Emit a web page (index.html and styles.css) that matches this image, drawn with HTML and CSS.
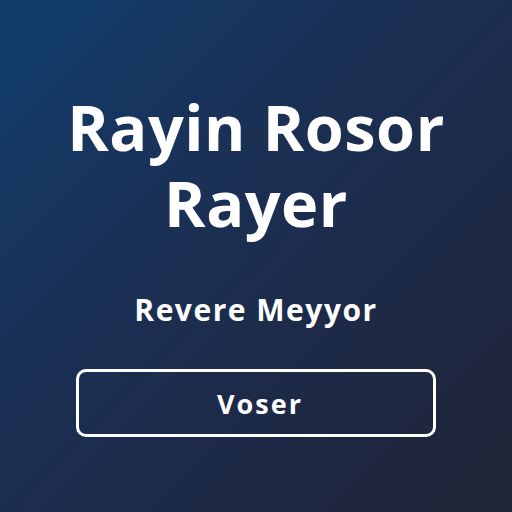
FILE: index.html
```html
<!DOCTYPE html>
<html>
<head>
<meta charset="utf-8">
<link rel="stylesheet" href="styles.css">
</head>
<body>
<main class="screen">
  <h1 class="title"><span class="line">Rayin Rosor</span><span class="line">Rayer</span></h1>
  <p class="subtitle">Revere Meyyor</p>
  <button class="action">Voser</button>
</main>
</body>
</html>
```
FILE: styles.css
```css
html, body {
  margin: 0;
  padding: 0;
  width: 512px;
  height: 512px;
  overflow: hidden;
}
.screen {
  width: 512px;
  height: 512px;
  box-sizing: border-box;
  background: linear-gradient(135deg, #0f3d6c 0%, #1a3157 35%, #1d2a47 65%, #1f2436 100%);
  display: flex;
  flex-direction: column;
  align-items: center;
  padding-top: 89px;
  font-family: "Open Sans", "Liberation Sans", sans-serif;
  color: #ffffff;
}
.title {
  margin: 0;
  font-size: 63px;
  font-weight: 700;
  line-height: 76px;
  text-align: center;
  letter-spacing: 0.5px;
}
.line {
  display: block;
  height: 76px;
}
.subtitle {
  margin: 52px 0 0 0;
  font-size: 30px;
  font-weight: 700;
  line-height: 34px;
  letter-spacing: 1.5px;
}
.action {
  margin-top: 42px;
  width: 360px;
  height: 68px;
  padding: 0 0 0 8px;
  border: 3px solid #ffffff;
  border-radius: 10px;
  background: transparent;
  color: #ffffff;
  font-family: "Open Sans", "Liberation Sans", sans-serif;
  font-size: 27px;
  font-weight: 700;
  letter-spacing: 2px;
}
```
